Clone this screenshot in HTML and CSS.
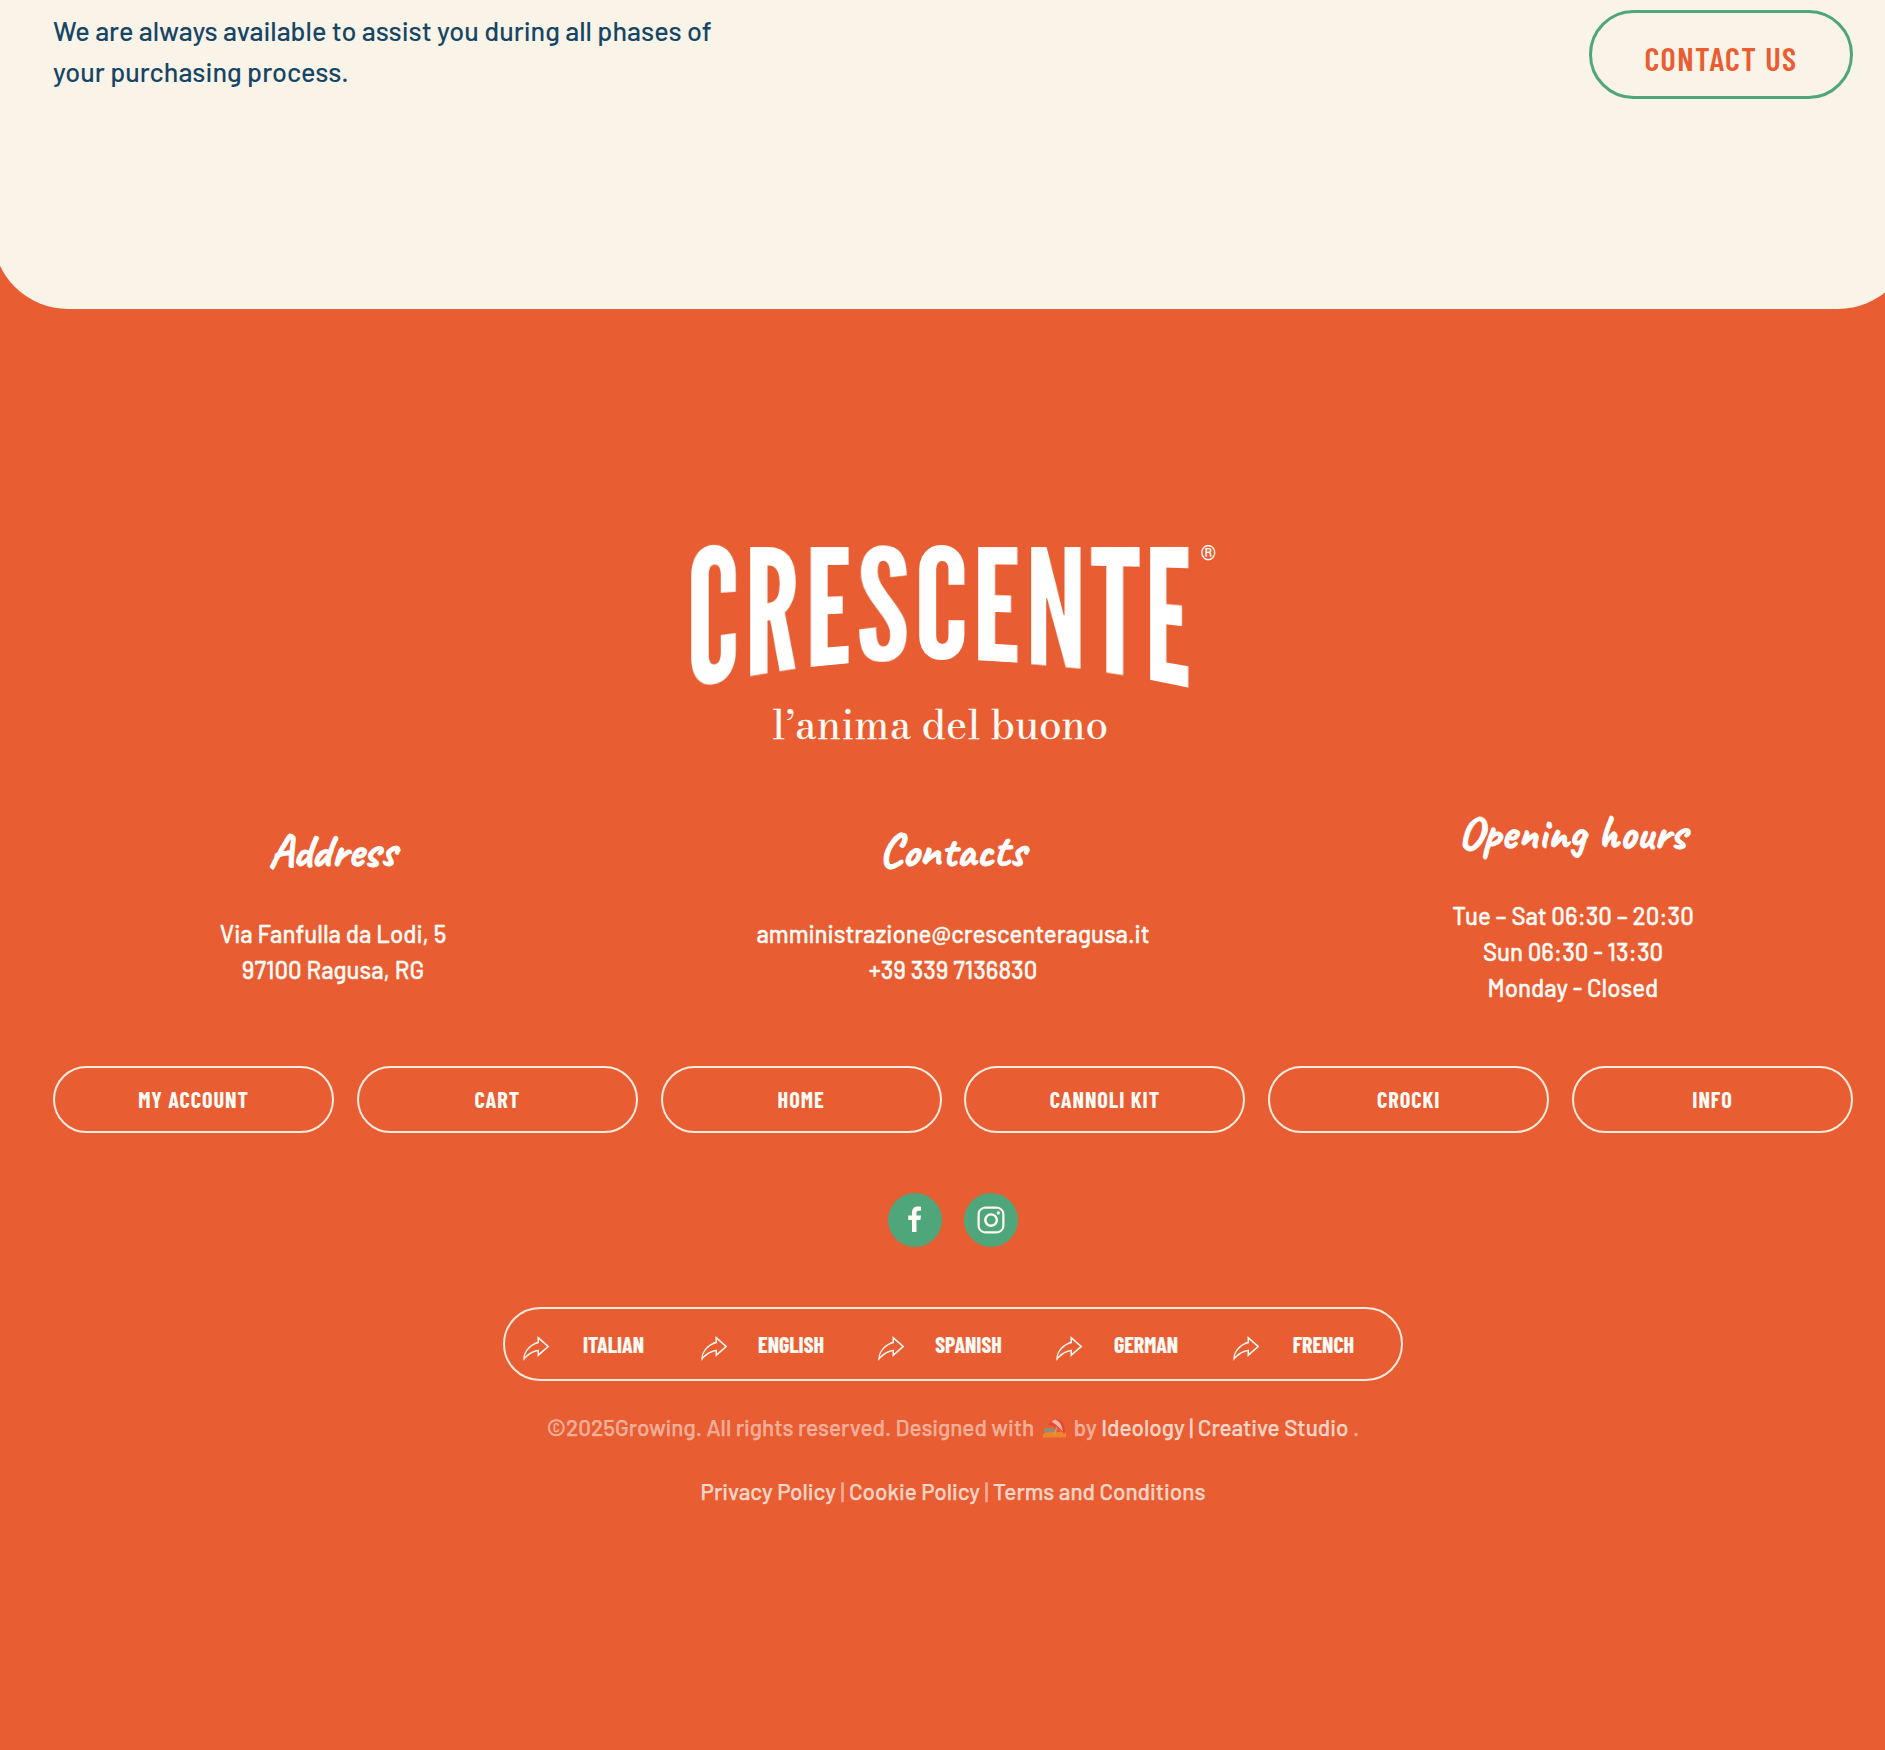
FILE: index.html
```
<!DOCTYPE html>
<html lang="en">
<head>
<meta charset="utf-8">
<title>Crescente</title>
<link rel="stylesheet" href="styles.css">
</head>
<body>
<div class="page">
  <section class="assist">
    <p class="assist-text">We are always available to assist you during all phases of your purchasing process.</p>
    <a class="contact-btn">CONTACT US</a>
  </section>

  <footer class="footer">
    <div class="brand">
      <div class="wordmark">
        <span class="cell c1"><span class="glyph">C</span></span>
        <span class="cell r1"><span class="glyph">R</span></span>
        <span class="cell e1"><span class="glyph">E</span></span>
        <span class="cell s1"><span class="glyph">S</span></span>
        <span class="cell c2"><span class="glyph">C</span></span>
        <span class="cell e2"><span class="glyph">E</span></span>
        <span class="cell n1"><span class="glyph">N</span></span>
        <span class="cell t1"><span class="glyph">T</span></span>
        <span class="cell e3"><span class="glyph">E</span></span>
        <span class="reg">®</span>
      </div>
      <div class="tagline"><span class="lead">l’anima</span> del buono</div>
    </div>

    <div class="columns">
      <div class="column">
        <h3>Address</h3>
        <p>Via Fanfulla da Lodi, 5<br>97100 Ragusa, RG</p>
      </div>
      <div class="column">
        <h3>Contacts</h3>
        <p>amministrazione@crescenteragusa.it<br>+39 339 7136830</p>
      </div>
      <div class="column">
        <h3>Opening hours</h3>
        <p>Tue – Sat 06:30 – 20:30<br>Sun 06:30 - 13:30<br>Monday - Closed</p>
      </div>
    </div>

    <nav class="links">
      <a>MY ACCOUNT</a><a>CART</a><a>HOME</a><a>CANNOLI KIT</a><a>CROCKI</a><a>INFO</a>
    </nav>

    <div class="social">
      <a><svg width="30" height="30" viewBox="0 0 20 20"><path d="M11,10h2.6l0.4-3H11V5.3c0-0.9,0.2-1.5,1.5-1.5H14V1.1c-0.3,0-1-0.1-2.1-0.1C9.6,1,8,2.4,8,5v2H5.5v3H8v8h3V10z"/></svg></a>
      <a><svg width="30" height="30" viewBox="0 0 20 20"><path d="M13.55,1H6.46C3.45,1,1,3.44,1,6.44v7.12c0,3,2.45,5.44,5.46,5.44h7.08c3.02,0,5.46-2.44,5.46-5.44V6.44C19.01,3.44,16.56,1,13.55,1z M17.5,14c0,1.93-1.57,3.5-3.5,3.5H6c-1.93,0-3.5-1.57-3.5-3.5V6c0-1.93,1.57-3.5,3.5-3.5h8c1.93,0,3.5,1.57,3.5,3.5V14z"/><circle cx="14.87" cy="5.26" r="1.09"/><path d="M10.03,5.45c-2.55,0-4.63,2.06-4.63,4.6c0,2.55,2.07,4.61,4.63,4.61c2.56,0,4.63-2.061,4.63-4.61C14.65,7.51,12.58,5.45,10.03,5.45z M10.08,13c-1.66,0-3-1.34-3-2.99c0-1.65,1.34-2.99,3-2.99s3,1.34,3,2.99C13.08,11.66,11.74,13,10.08,13z"/></svg></a>
    </div>

    <svg class="defs" width="0" height="0"><symbol id="forward" viewBox="0 0 20 20"><path d="M2.47,13.11C4.02,10.02 6.27,7.85 9.04,6.61C9.48,6.41 10.27,6.13 11,5.91L11,2L18.89,9L11,16L11,12.13C9.25,12.47 7.58,13.19 6.02,14.25C3.03,16.28 1.63,18.54 1.63,18.54C1.63,18.54 1.38,15.28 2.47,13.11Z M5.3,13.53C6.92,12.4 9.04,11.4 12,10.92L12,13.63L17.36,9L12,4.25L12,6.8C11.71,6.86 10.86,7.02 9.67,7.49C6.79,8.65 4.58,10.96 3.49,13.08C3.18,13.7 2.68,14.87 2.49,16C3.28,15.05 4.4,14.15 5.3,13.53Z"/></symbol></svg>
    <nav class="languages">
      <a><svg><use href="#forward"/></svg><span>ITALIAN</span></a>
      <a><svg><use href="#forward"/></svg><span>ENGLISH</span></a>
      <a><svg><use href="#forward"/></svg><span>SPANISH</span></a>
      <a><svg><use href="#forward"/></svg><span>GERMAN</span></a>
      <a><svg><use href="#forward"/></svg><span>FRENCH</span></a>
    </nav>

    <p class="legal">©2025Growing. All rights reserved. Designed with <svg class="beach" width="23" height="20" viewBox="0 0 23 20"><path fill="#4fb3a8" d="M1 9h10l2 5H1z"/><path fill="#f5a623" d="M0 15q6-3 12-1.500 6-1.500 11 0v3.500q0 1.500-1.500 1.500h-20Q0 20 0 18.500z"/><path stroke="#d8c8b8" stroke-width="1.200" d="M14 8l-3 8"/><path fill="#e8323c" d="M5 6Q10-1 16 .5q7 3 5.500 14.500Q14 6 5 6z"/><path fill="#fff" d="M8.500 2.800q2-1.600 4-2.200Q19 4 20 12.500l-3.500-3.500Q13 5 8.500 2.800z"/></svg> by <a>Ideology | Creative Studio</a> .</p>
    <p class="legal"><a>Privacy Policy</a> | <a>Cookie Policy</a> | <a>Terms and Conditions</a></p>
  </footer>
</div>
</body>
</html>
```
FILE: styles.css
```
* { box-sizing: border-box; margin: 0; padding: 0; }

body {
  background: #e95d32;
  font-family: Barlow, Roboto, sans-serif;
  font-weight: 500;
  overflow: hidden;
}

.page { width: 1920px; height: 1750px; margin-left: -7px; }

.assist {
  display: flex;
  justify-content: space-between;
  align-items: flex-start;
  height: 309px;
  padding: 10px 60px 0;
  background: #faf3e7;
  border-radius: 0 0 75px 75px;
}
.assist-text { width: 700px; font-size: 27px; line-height: 41px; color: #164666; }
.contact-btn {
  width: 264px;
  height: 89px;
  padding-top: 6px;
  border: 3px solid #4fa67b;
  border-radius: 45px;
  font: 600 32.4px/79px "Barlow Condensed", sans-serif;
  letter-spacing: 1.4px;
  text-align: center;
  color: #e95d32;
}

.footer {
  display: flex;
  flex-direction: column;
  align-items: center;
  padding: 239px 60px 0;
  color: #fffbf6;
}

.brand { width: 532px; height: 210px; }

/* Each letter sits in its own cell and is stretched to a trapezoid: flat top, sloped foot. */
.wordmark { display: flex; height: 149px; margin-left: 4px; }
.cell { flex: none; width: calc(var(--W) * 1px); height: 135px; margin-right: calc(var(--gap) * 1px); }
.glyph {
  display: block;
  width: max-content;
  font: 400 180px/180px "League Gothic", "Bebas Neue", sans-serif;
  color: #fff;
  transform-origin: 0 0;
  transform:
    matrix3d(calc(var(--W) / var(--w) * var(--L) / var(--R)), 0, 0, calc((var(--L) / var(--R) - 1) / var(--w)),
             0, calc(var(--L) / 132.2), 0, 0,
             0, 0, 1, 0,
             0, 0, 0, 1)
    translate(calc(var(--x) * -1px), -25px);
}
.c1 { --W: 45; --gap: 14; --w: 52.5; --x: 6; --L: 141; --R: 132; }
.r1 { --W: 46.4; --gap: 14.7; --w: 54.5; --x: 7; --L: 129; --R: 121.4; }
.e1 { --W: 37.8; --gap: 9.7; --w: 44.5; --x: 7.5; --L: 120; --R: 116.3; }
.s1 { --W: 48.9; --gap: 11.4; --w: 56; --x: 3; --L: 115; --R: 113; }
.c2 { --W: 46.1; --gap: 12.9; --w: 53; --x: 6; --L: 112; --R: 112; }
.e2 { --W: 39.6; --gap: 13.5; --w: 45; --x: 7; --L: 113.3; --R: 115.7; }
.n1 { --W: 50; --gap: 10; --w: 57.5; --x: 7; --L: 116.7; --R: 121.3; }
.t1 { --W: 48.6; --gap: 10.4; --w: 56.5; --x: 1.5; --L: 122.8; --R: 130.3; }
.e3 { --W: 39; --gap: 11.5; --w: 45.5; --x: 7; --L: 133; --R: 141; }
.reg { margin-top: -5px; font: 500 20px/20px Roboto, sans-serif; color: #fff; }

.tagline {
  margin-left: 85px;
  font: 400 40.4px/56px "Bodoni Moda", "Libre Bodoni", serif;
  letter-spacing: -0.1px;
  white-space: nowrap;
  -webkit-text-stroke: 0.3px;
}
.lead { letter-spacing: 0.6px; }

.columns { display: flex; align-items: center; gap: 60px; width: 100%; margin-top: 45px; }
.column { flex: 1; text-align: center; font-size: 24px; line-height: 36px; -webkit-text-stroke: 0.3px; }
.column h3 { margin: 0 1.5px 34.6px 0; font: 700 47px/60px Caveat, cursive; color: #fff; -webkit-text-stroke: 0.9px; }

.links { display: flex; gap: 22.8px; width: 100%; margin-top: 60px; }
.links a {
  flex: 1;
  height: 67px;
  border: 2px solid #fcecdf;
  border-radius: 34px;
  font: 700 22.4px/62px "Barlow Condensed", sans-serif;
  letter-spacing: 0.9px;
  text-align: center;
}

.social { display: flex; gap: 22px; margin-top: 60px; }
.social a {
  display: flex;
  align-items: center;
  justify-content: center;
  width: 54px;
  height: 54px;
  border-radius: 50%;
  background: #4fa67b;
}
.social svg, .languages svg { fill: #fffaf4; }
.defs { display: block; }

.languages {
  display: flex;
  align-items: center;
  gap: 23.5px;
  width: 900px;
  height: 74px;
  margin-top: 60px;
  padding-left: 16px;
  border: 2px solid #fcecdf;
  border-radius: 37px;
  font: 700 22px/30px "Barlow Condensed", sans-serif;
  -webkit-text-stroke: 0.2px;
}
.languages a { display: flex; align-items: center; flex: none; width: 154px; }
.languages svg { width: 30px; height: 30px; margin-top: 8px; }
.languages span { flex: 1; padding-left: 1px; text-align: center; }

.legal { margin-top: 29px; font-size: 22.5px; line-height: 34px; color: rgba(255, 250, 244, 0.5); -webkit-text-stroke: 0.25px; }
.legal + .legal { margin-top: 30px; }
.legal a { color: rgba(255, 250, 244, 0.75); }
.beach { margin: 0 3.5px 0 4px; vertical-align: -3px; opacity: 0.55; }
```
